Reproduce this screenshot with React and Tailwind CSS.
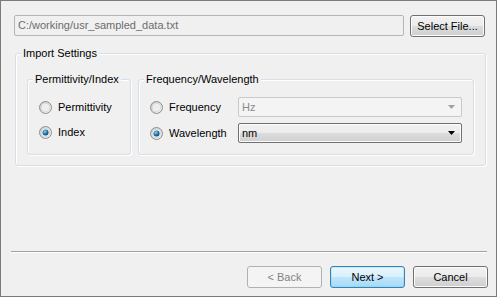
import React from 'react';

const font = { fontFamily: '"Liberation Sans", Arial, sans-serif' };

function Radio({ checked }) {
  return (
    <svg width="13" height="13" viewBox="0 0 13 13" className="shrink-0">
      <defs>
        <linearGradient id={checked ? 'rc' : 'ru'} x1="0" y1="0" x2="1" y2="1">
          <stop offset="0" stopColor="#c8c8c8" />
          <stop offset="1" stopColor="#f6f6f6" />
        </linearGradient>
        <radialGradient id="dot" cx="0.4" cy="0.35" r="0.7">
          <stop offset="0" stopColor="#8fd3f5" />
          <stop offset="0.6" stopColor="#1c6fa8" />
          <stop offset="1" stopColor="#0b3d66" />
        </radialGradient>
      </defs>
      <circle cx="6.5" cy="6.5" r="6" fill={`url(#${checked ? 'rc' : 'ru'})`} stroke="#8e8f8f" strokeWidth="1" />
      <circle cx="6.5" cy="6.5" r="4.3" fill="#eeeeee" stroke="#d0d0d0" strokeWidth="0.6" />
      {checked && <circle cx="6.5" cy="6.5" r="3" fill="url(#dot)" />}
    </svg>
  );
}

function Arrow({ color }) {
  return (
    <svg width="7" height="4" viewBox="0 0 7 4">
      <path d="M0 0h7L3.5 4z" fill={color} />
    </svg>
  );
}

function Group({ title, className, children }) {
  return (
    <div className={`relative rounded-[3px] border border-[#d5dfe5] shadow-[inset_1px_1px_0_#ffffff,1px_1px_0_#ffffff] ${className}`}>
      <span className="absolute -top-[8px] left-[5px] bg-[#f0f0f0] px-[2px] text-[11px] leading-[14px] text-black">
        {title}
      </span>
      {children}
    </div>
  );
}

function Button({ children, variant }) {
  if (variant === 'disabled') {
    return (
      <div className="flex h-[22px] w-[75px] items-center justify-center rounded-[3px] border border-[#adb2b5] bg-[#f4f4f4] text-[11px] text-[#838383]">
        {children}
      </div>
    );
  }
  if (variant === 'default') {
    return (
      <div className="flex h-[22px] w-[75px] items-center justify-center rounded-[3px] border border-[#3c7fb1] bg-[linear-gradient(#eaf6fd_0%,#d9f0fc_50%,#bee6fd_51%,#a7d9f5_100%)] text-[11px] text-black shadow-[inset_0_0_0_1px_#48d8fb40]">
        {children}
      </div>
    );
  }
  return (
    <div className="flex h-[22px] w-[75px] items-center justify-center rounded-[3px] border border-[#707070] bg-[linear-gradient(#f2f2f2_0%,#ebebeb_50%,#dddddd_51%,#cfcfcf_100%)] text-[11px] text-black shadow-[inset_0_0_0_1px_#fcfcfc]">
      {children}
    </div>
  );
}

export default function App() {
  return (
    <div style={font} className="h-[297px] w-[497px] border border-[#7b7b7b] bg-[#f0f0f0] text-[11px] text-black">
      {/* File row */}
      <div className="ml-[13px] mt-[14px] flex items-start gap-[6px]">
        <div className="flex h-[21px] w-[390px] items-center rounded-[2px] border border-[#b5b5b5] bg-[#f0f0f0] pl-[3px] text-[11px] text-[#6d6d6d]">
          C:/working/usr_sampled_data.txt
        </div>
        <Button>Select File...</Button>
      </div>

      {/* Import settings */}
      <Group title="Import Settings" className="ml-[14px] mt-[16px] h-[113px] w-[471px]">
        <div className="ml-[11px] mt-[25px] flex gap-[7px]">
          <Group title="Permittivity/Index" className="h-[76px] w-[104px]">
            <div className="ml-[11px] mt-[21px] flex flex-col gap-[12px]">
              <div className="flex h-[13px] items-center gap-[6px]">
                <Radio checked={false} />
                <span>Permittivity</span>
              </div>
              <div className="flex h-[13px] items-center gap-[6px]">
                <Radio checked />
                <span>Index</span>
              </div>
            </div>
          </Group>

          <Group title="Frequency/Wavelength" className="h-[76px] w-[336px]">
            <div className="ml-[11px] mt-[17px] flex flex-col gap-[6px]">
              <div className="flex h-[20px] items-center">
                <div className="flex w-[88px] items-center gap-[6px]">
                  <Radio checked={false} />
                  <span>Frequency</span>
                </div>
                <div className="flex h-[20px] w-[224px] items-center justify-between rounded-[2px] border border-[#c9c9c9] bg-[#f4f4f4] pl-[3px] pr-[6px] text-[#8a8a8a]">
                  <span>Hz</span>
                  <Arrow color="#a0a0a0" />
                </div>
              </div>
              <div className="flex h-[20px] items-center">
                <div className="flex w-[88px] items-center gap-[6px]">
                  <Radio checked />
                  <span>Wavelength</span>
                </div>
                <div className="flex h-[20px] w-[224px] items-center justify-between rounded-[2px] border border-[#707070] bg-[linear-gradient(#f2f2f2_0%,#ebebeb_50%,#dddddd_51%,#cfcfcf_100%)] pl-[3px] pr-[6px] text-black shadow-[inset_0_0_0_1px_#fcfcfc]">
                  <span>nm</span>
                  <Arrow color="#000000" />
                </div>
              </div>
            </div>
          </Group>
        </div>
      </Group>

      {/* Separator */}
      <div className="ml-[10px] mt-[85px] w-[476px] border-t border-b border-t-[#a0a0a0] border-b-[#ffffff]" />

      {/* Buttons */}
      <div className="mr-[8px] mt-[13px] flex justify-end gap-[8px]">
        <Button variant="disabled">&lt; Back</Button>
        <Button variant="default">Next &gt;</Button>
        <Button>Cancel</Button>
      </div>
    </div>
  );
}
